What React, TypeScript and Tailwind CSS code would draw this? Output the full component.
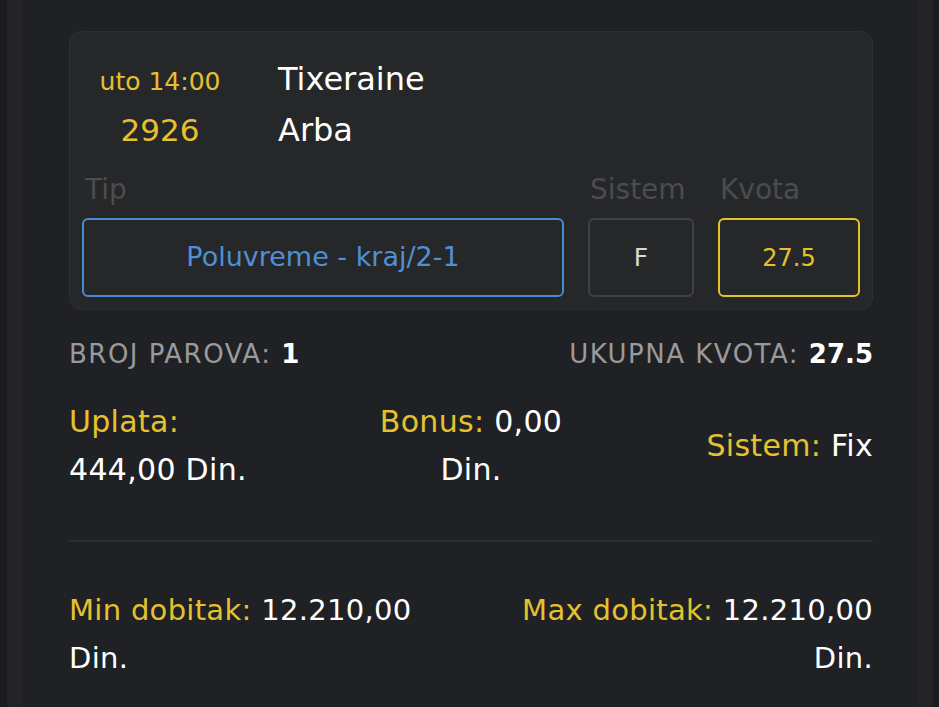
import React from 'react';

const font = { fontFamily: '"DejaVu Sans", "Liberation Sans", sans-serif' };

export default function App() {
  return (
    <div className="flex h-[707px] w-[939px] overflow-hidden bg-[#1b1b1d]" style={font}>
      <div className="w-[7px] shrink-0 bg-[#1b1b1d]" />
      <div className="w-[15px] shrink-0 bg-[#242427]" />
      <div className="flex-1 bg-[#202124] pl-[47px] pr-[45px] pt-[31px]">
        {/* ticket card */}
        <div className="rounded-xl border border-[#2e2f32] bg-[#262729] px-3 pb-3 pt-[23px]">
          <div className="flex">
            <div className="flex w-[156px] flex-col items-center">
              <span className="mt-[3px] h-[45px] text-[25px] leading-[48px] text-[#e6c12f]">uto 14:00</span>
              <span className="h-[54px] text-[31px] leading-[54px] text-[#e6c12f]">2926</span>
            </div>
            <div className="ml-[40px] flex flex-col">
              <span className="h-[48px] text-[32px] leading-[48px] text-white">Tixeraine</span>
              <span className="h-[54px] text-[32px] leading-[54px] text-white">Arba</span>
            </div>
          </div>
          <div className="mt-[13px] flex gap-6">
            <div className="flex flex-1 flex-col">
              <span className="ml-[3px] h-[48px] text-[28px] leading-[40px] text-[#4b4c4f]">Tip</span>
              <div className="flex h-[79px] items-center justify-center rounded-md border-2 border-[#4a8ad3] text-[27px] text-[#4f8fd7]">
                Poluvreme - kraj/2-1
              </div>
            </div>
            <div className="flex w-[106px] flex-col">
              <span className="ml-[2px] h-[48px] text-[28px] leading-[40px] text-[#4b4c4f]">Sistem</span>
              <div className="flex h-[79px] items-center justify-center rounded-md border-2 border-[#404144] text-[25px] text-[#d9d9d9]">
                F
              </div>
            </div>
            <div className="flex w-[142px] flex-col">
              <span className="ml-[2px] h-[48px] text-[28px] leading-[40px] text-[#4b4c4f]">Kvota</span>
              <div className="flex h-[79px] items-center justify-center rounded-md border-2 border-[#e6c12f] text-[24px] text-[#e6c12f]">
                27.5
              </div>
            </div>
          </div>
        </div>

        {/* summary */}
        <div className="mt-[28px] flex h-[32px] items-center justify-between text-[26px] tracking-[1.5px]">
          <span className="text-[#9a9a9c]">
            BROJ PAROVA: <span className="font-bold tracking-normal text-white">1</span>
          </span>
          <span className="text-[#9a9a9c]">
            UKUPNA KVOTA: <span className="font-bold tracking-normal text-white">27.5</span>
          </span>
        </div>

        <div className="mt-[28px] grid grid-cols-3 text-[30px] leading-[48px] tracking-[0.3px]">
          <div className="flex flex-col text-white">
            <span className="text-[#e6c12f]">Uplata:</span>
            <span>444,00 Din.</span>
          </div>
          <div className="flex flex-col items-center text-white">
            <span>
              <span className="text-[#e6c12f]">Bonus:</span> 0,00
            </span>
            <span>Din.</span>
          </div>
          <div className="flex items-center justify-end text-white">
            <span>
              <span className="text-[#e6c12f]">Sistem:</span> Fix
            </span>
          </div>
        </div>

        <div className="mt-[46px] h-[2px] bg-[#2c2d30]" />

        <div className="mt-[44px] flex justify-between text-[29px] leading-[48px] tracking-[0.3px] text-white">
          <div className="flex flex-col">
            <span>
              <span className="text-[#e6c12f]">Min dobitak:</span> 12.210,00
            </span>
            <span>Din.</span>
          </div>
          <div className="flex flex-col items-end">
            <span>
              <span className="text-[#e6c12f]">Max dobitak:</span> 12.210,00
            </span>
            <span>Din.</span>
          </div>
        </div>
      </div>
      <div className="w-[15px] shrink-0 bg-[#242427]" />
      <div className="w-[6px] shrink-0 bg-[#1b1b1d]" />
    </div>
  );
}
